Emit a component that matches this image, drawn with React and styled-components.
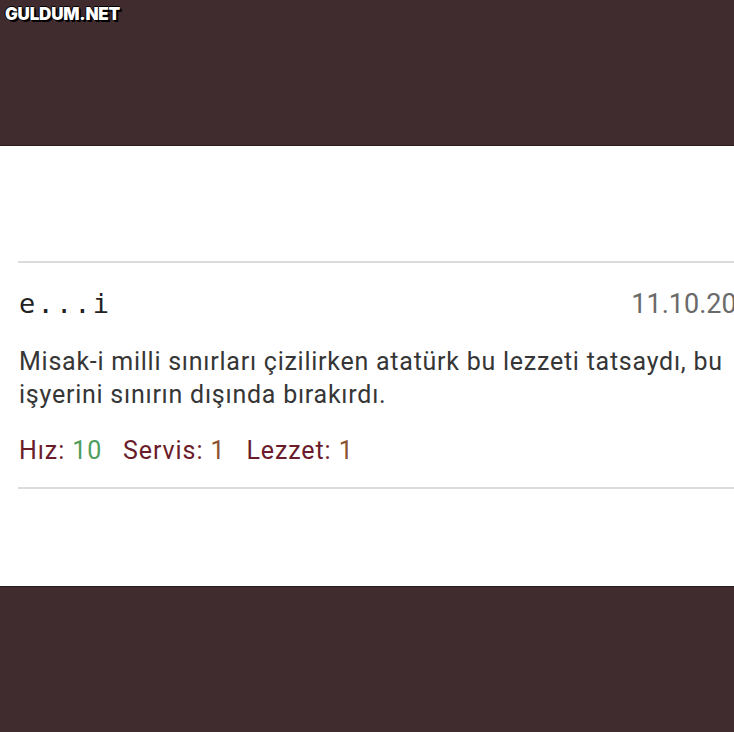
import React from 'react'
import styled, { createGlobalStyle } from 'styled-components';

const GlobalStyle = createGlobalStyle`
    html, body { margin: 0; padding: 0; background: #402c2e; }
    body { width: 734px; height: 732px; overflow: hidden; }
`;

const Page = styled.div`
    width: 734px;
    height: 732px;
    display: flex;
    flex-direction: column;
    background: #402c2e;
`;

const Band = styled.div`
    height: ${props => props.h}px;
    background: #402c2e;
    position: relative;
    flex-shrink: 0;
`;

const Logo = styled.div`
    position: absolute;
    left: 5px;
    top: 4px;
    font-family: 'Inter', 'Lato', sans-serif;
    font-weight: 900;
    font-size: 17px;
    letter-spacing: -0.2px;
    color: #fff;
    text-shadow: 1px 1px 0 #000, 2px 2px 0 #000, -1px 0 0 #000, 0 -1px 0 #000;
`;

const Sheet = styled.div`
    height: 442px;
    flex-shrink: 0;
    background: #fff;
    overflow: hidden;
    padding-top: 115px;
    box-sizing: border-box;
    border-top: 1px solid #2a1c1d;
    border-bottom: 1px solid #2a1c1d;
`;

const Review = styled.div`
    margin-left: 18px;
    width: 748px;
    border-top: 2px solid #dcdcdc;
    border-bottom: 2px solid #dcdcdc;
    padding: 25px 0 21px 1px;
`;

const Head = styled.div`
    display: flex;
    justify-content: space-between;
    align-items: baseline;
    line-height: 32px;
`;

const User = styled.span`
    font-family: 'DejaVu Sans Mono', monospace;
    font-size: 27px;
    letter-spacing: 2.2px;
    color: #222;
`;

const Date = styled.span`
    font-family: 'Roboto', sans-serif;
    font-size: 27px;
    color: #6a6a6a;
`;

const Body = styled.p`
    margin: 25px 0 0;
    font-family: 'Roboto', sans-serif;
    font-size: 25px;
    letter-spacing: 0.75px;
    line-height: 33px;
    color: #363636;
    width: 712px;
`;

const Ratings = styled.div`
    margin-top: 25px;
    display: flex;
    gap: 21px;
    font-family: 'Roboto', sans-serif;
    font-size: 25px;
    letter-spacing: 0.9px;
    line-height: 30px;
`;

const Label = styled.span`
    color: #6a1c2a;
`;

const Score = styled.span`
    color: ${props => props.good ? '#4f9d5e' : '#8b5232'};
`;

function App() {
    const scores = [
        { label: 'Hız', value: 10, good: true },
        { label: 'Servis', value: 1 },
        { label: 'Lezzet', value: 1 },
    ];

    return (
        <Page>
            <GlobalStyle />
            <Band h={145}>
                <Logo>GULDUM.NET</Logo>
            </Band>
            <Sheet>
                <Review>
                    <Head>
                        <User>e...i</User>
                        <Date>11.10.2019</Date>
                    </Head>
                    <Body>
                        Misak-i milli sınırları çizilirken atatürk bu lezzeti tatsaydı, bu işyerini sınırın dışında bırakırdı.
                    </Body>
                    <Ratings>
                        {scores.map(s => (
                            <span key={s.label}>
                                <Label>{s.label}: </Label>
                                <Score good={s.good}>{s.value}</Score>
                            </span>
                        ))}
                    </Ratings>
                </Review>
            </Sheet>
            <Band h={145} />
        </Page>
    )
}
export default App;
